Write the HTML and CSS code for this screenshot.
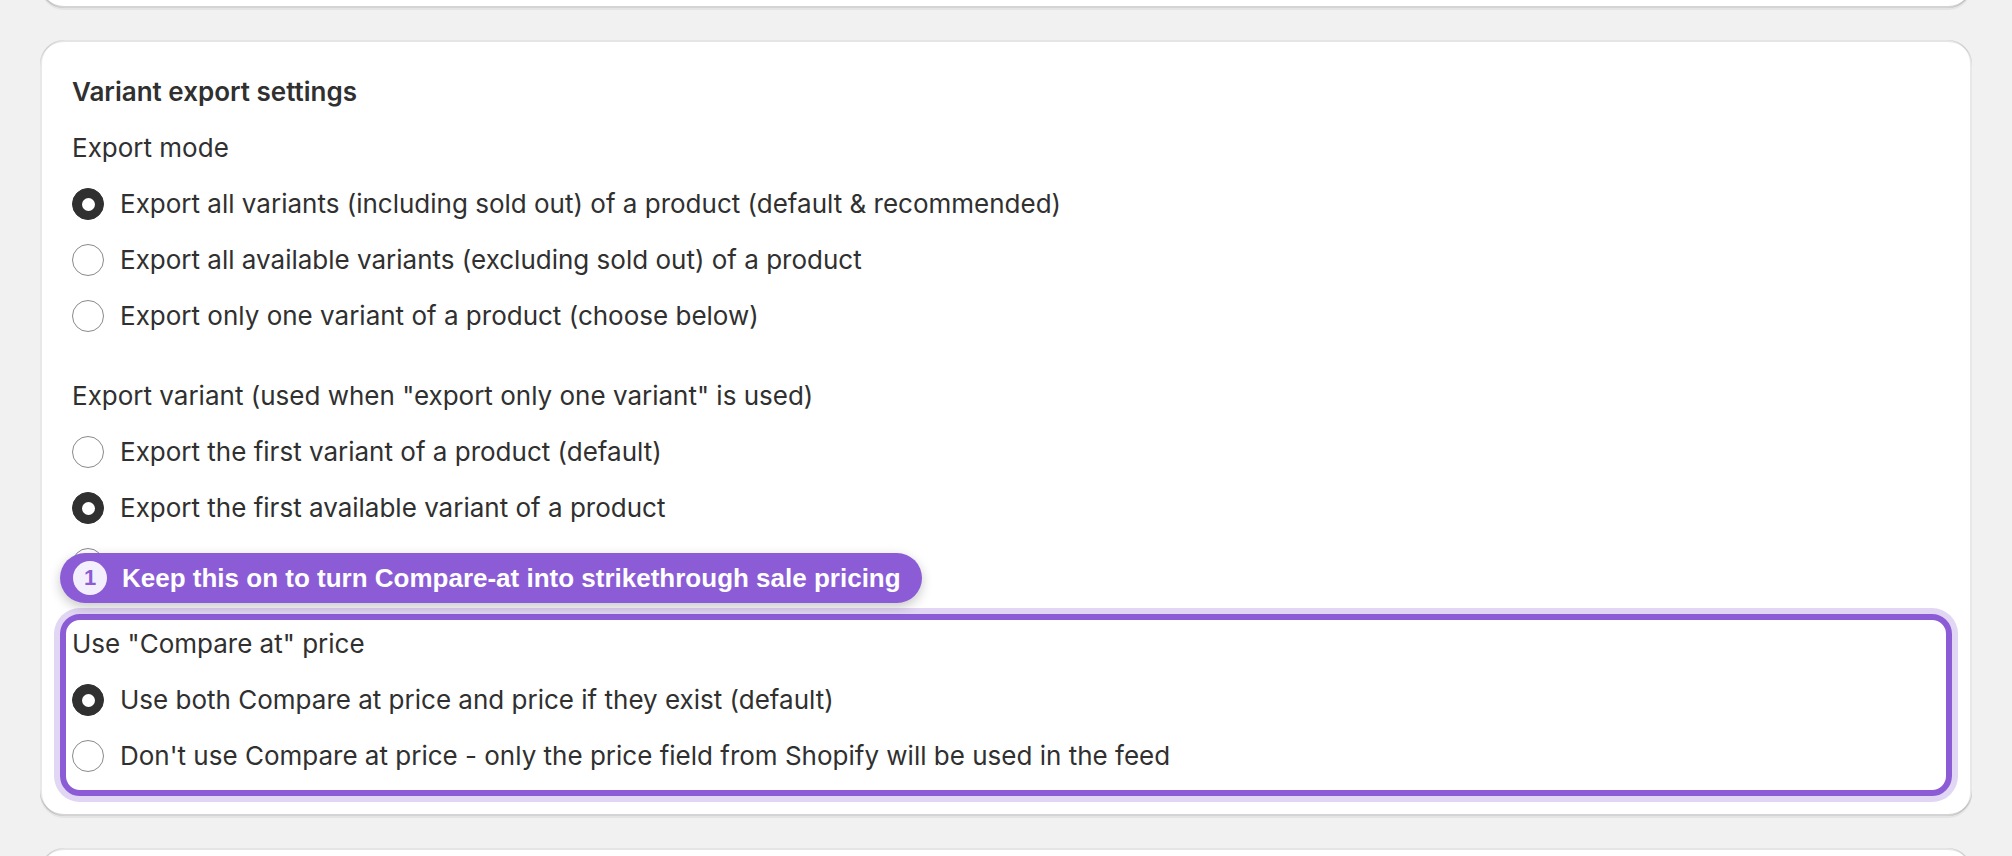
FILE: index.html
```html
<!DOCTYPE html>
<html lang="en">
<head>
  <meta charset="UTF-8" />
  <title>Feed settings</title>
  <link rel="stylesheet" href="styles.css">
</head>
<body>

  <div class="page">

    <!-- previous settings card (scrolled out of view) -->
    <div class="card card-prev"></div>

    <div class="card">
      <h2 class="card-title">Variant export settings</h2>

      <div class="choice-group">
        <div class="group-label">Export mode</div>
        <div class="choice">
          <span class="radio checked"><span class="dot"></span></span>
          <span>Export all variants (including sold out) of a product (default &amp; recommended)</span>
        </div>
        <div class="choice">
          <span class="radio"></span>
          <span>Export all available variants (excluding sold out) of a product</span>
        </div>
        <div class="choice">
          <span class="radio"></span>
          <span>Export only one variant of a product (choose below)</span>
        </div>
      </div>

      <div class="choice-group">
        <div class="group-label">Export variant (used when "export only one variant" is used)</div>
        <div class="choice">
          <span class="radio"></span>
          <span>Export the first variant of a product (default)</span>
        </div>
        <div class="choice">
          <span class="radio checked"><span class="dot"></span></span>
          <span>Export the first available variant of a product</span>
        </div>
        <!-- third option sits under the guide tip -->
        <div class="choice">
          <span class="radio"></span>
        </div>
      </div>

      <!-- highlighted field with its guide tip -->
      <div class="choice-group highlight">
        <div class="tip">
          <span class="tip-step">1</span>
          <span>Keep this on to turn Compare-at into strikethrough sale pricing</span>
        </div>
        <div class="group-label">Use "Compare at" price</div>
        <div class="choice">
          <span class="radio checked"><span class="dot"></span></span>
          <span>Use both Compare at price and price if they exist (default)</span>
        </div>
        <div class="choice">
          <span class="radio"></span>
          <span>Don't use Compare at price - only the price field from Shopify will be used in the feed</span>
        </div>
      </div>
    </div>

    <!-- next settings card -->
    <div class="card card-next"></div>

  </div>

</body>
</html>
```

FILE: styles.css
```css
html, body {
  margin: 0;
  height: 856px;
  overflow: hidden;
}

body {
  background-color: #f1f1f1;
  color: #303030;
  font-family: Inter, "Noto Sans", sans-serif;
  font-size: 26px;
  line-height: 40px;
}

.page {
  display: flex;
  flex-direction: column;
  gap: 32px;
  padding: 0 40px;
}

.card {
  background: #fff;
  border-radius: 24px;
  padding: 32px;
  display: flex;
  flex-direction: column;
  gap: 40px;
  box-shadow:
    inset 2px 0 0 rgba(0, 0, 0, 0.09),
    inset -2px 0 0 rgba(0, 0, 0, 0.09),
    inset 0 -2px 0 rgba(0, 0, 0, 0.17),
    inset 0 2px 0 rgba(204, 204, 204, 0.5),
    0 2px 0 rgba(26, 26, 26, 0.06);
}

.card-prev {
  height: 60px;
  margin-top: -116px;
}

.card-next {
  height: 100px;
}

.card-title {
  margin: 0 0 -24px;
  font-size: 26px;
  line-height: 40px;
  font-weight: 600;
}

.choice-group {
  display: flex;
  flex-direction: column;
  gap: 16px;
}

.choice {
  display: flex;
  align-items: center;
  gap: 16px;
  height: 40px;
}

.radio {
  width: 32px;
  height: 32px;
  box-sizing: border-box;
  border: 1.5px solid #8a8a8a;
  border-radius: 50%;
  flex-shrink: 0;
  display: flex;
  align-items: center;
  justify-content: center;
}

.radio.checked {
  background: #303030;
  border-color: #303030;
}

.radio .dot {
  width: 13px;
  height: 13px;
  border-radius: 50%;
  background: #fff;
}

/* purple outline around the field the tip points at */
.highlight {
  position: relative;
  margin: -10px -12px -12px;
  padding: 4px 6px 14px;
  border: 6px solid #8b5cd6;
  border-radius: 20px;
  box-shadow: 0 0 0 6px #e1d6f4;
}

.tip {
  position: absolute;
  left: -6px;
  top: -67px;
  height: 50px;
  display: flex;
  align-items: center;
  gap: 15px;
  padding: 0 21px 0 13px;
  border-radius: 25px;
  background: #8b5cd6;
  color: #fff;
  font-family: "Liberation Sans", Arial, sans-serif;
  font-weight: 700;
  font-size: 26px;
  white-space: nowrap;
  box-shadow: 0 4px 12px rgba(0, 0, 0, 0.22);
}

.tip-step {
  width: 34px;
  height: 34px;
  border-radius: 50%;
  background: #f4effc;
  color: #8b5cd6;
  font-size: 22px;
  display: flex;
  align-items: center;
  justify-content: center;
}
```
